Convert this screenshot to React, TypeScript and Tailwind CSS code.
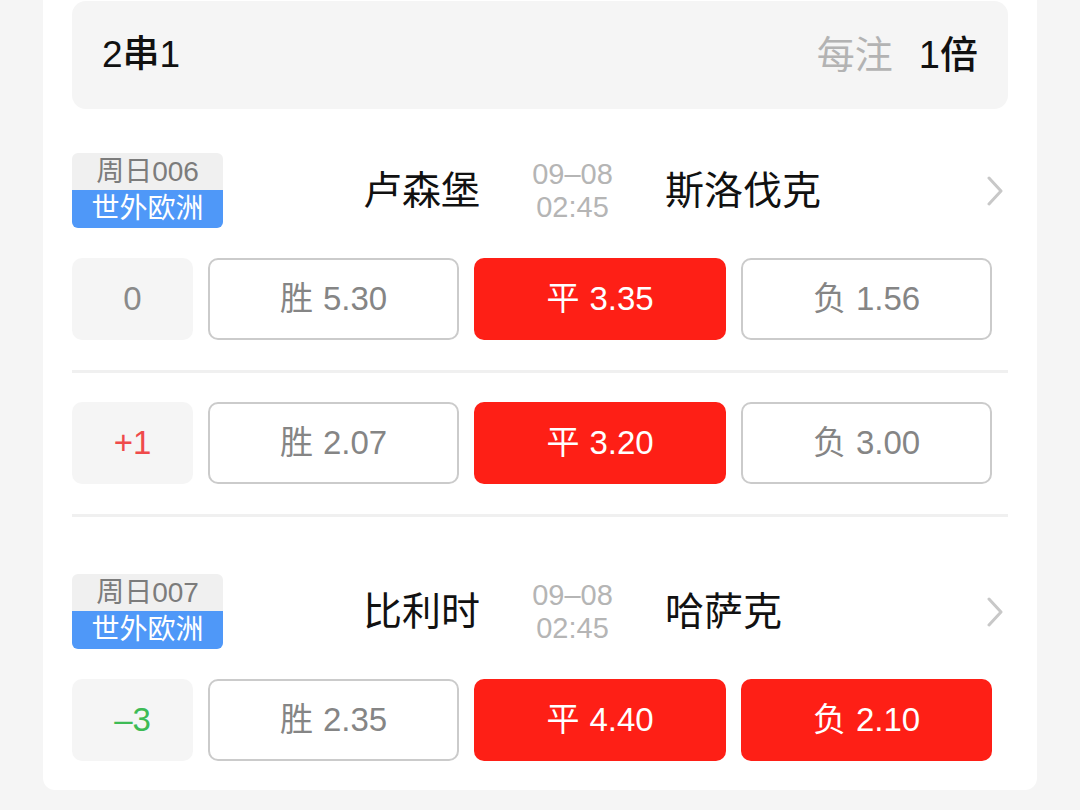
import React from "react";

const FONT = { fontFamily: '"Liberation Sans", "Noto Sans CJK SC", sans-serif' };

type Odd = { label: string; value: string; selected: boolean };
type Row = { handicap: string; hColor: string; odds: Odd[] };
type Match = { code: string; league: string; home: string; away: string; date: string; time: string; rows: Row[] };

const matches: Match[] = [
  {
    code: "周日006",
    league: "世外欧洲",
    home: "卢森堡",
    away: "斯洛伐克",
    date: "09–08",
    time: "02:45",
    rows: [
      {
        handicap: "0",
        hColor: "text-[#8a8a8a]",
        odds: [
          { label: "胜", value: "5.30", selected: false },
          { label: "平", value: "3.35", selected: true },
          { label: "负", value: "1.56", selected: false },
        ],
      },
      {
        handicap: "+1",
        hColor: "text-[#ef4a4a]",
        odds: [
          { label: "胜", value: "2.07", selected: false },
          { label: "平", value: "3.20", selected: true },
          { label: "负", value: "3.00", selected: false },
        ],
      },
    ],
  },
  {
    code: "周日007",
    league: "世外欧洲",
    home: "比利时",
    away: "哈萨克",
    date: "09–08",
    time: "02:45",
    rows: [
      {
        handicap: "–3",
        hColor: "text-[#3dbb55]",
        odds: [
          { label: "胜", value: "2.35", selected: false },
          { label: "平", value: "4.40", selected: true },
          { label: "负", value: "2.10", selected: true },
        ],
      },
    ],
  },
];

function Chevron() {
  return (
    <svg width="17" height="30" viewBox="0 0 17 30" fill="none">
      <path d="M2 2 L14 15 L2 28" stroke="#c8c8c8" strokeWidth="3" strokeLinecap="round" strokeLinejoin="round" />
    </svg>
  );
}

function OddsRow({ row }: { row: Row }) {
  return (
    <div className="flex gap-[15px] h-[82px]">
      <div className={`w-[121px] shrink-0 rounded-[10px] bg-[#f5f5f5] flex items-center justify-center text-[33px] ${row.hColor}`}>
        {row.handicap}
      </div>
      {row.odds.map((o, i) => (
        <div
          key={i}
          className={`${i === 1 ? "w-[252px]" : "w-[251px]"} shrink-0 rounded-[10px] flex items-center justify-center text-[33px] ${
            o.selected ? "bg-[#fe1f16] text-white" : "border-2 border-[#cbcbcb] bg-white text-[#858585]"
          }`}
        >
          <span>{o.label}</span>
          <span className="ml-[10px]">{o.value}</span>
        </div>
      ))}
    </div>
  );
}

function MatchHeader({ m }: { m: Match }) {
  return (
    <div className="flex items-center h-[75px]">
      <div className="w-[151px] shrink-0 h-[75px] rounded-[6px] overflow-hidden flex flex-col">
        <div className="h-[37px] bg-[#f0f0f0] text-[#7c7c7c] text-[28px] leading-[37px] text-center">{m.code}</div>
        <div className="h-[38px] bg-[#4f98f8] text-white text-[28px] leading-[38px] text-center">{m.league}</div>
      </div>
      <div className="w-[257px] shrink-0 text-right text-[39px] text-[#111] leading-none">{m.home}</div>
      <div className="w-[185px] shrink-0 text-center text-[29px] text-[#b5b5b5] leading-[33px]">
        <div>{m.date}</div>
        <div>{m.time}</div>
      </div>
      <div className="flex-1 text-[39px] text-[#111] leading-none">{m.away}</div>
      <div className="pr-[4px] flex items-center">
        <Chevron />
      </div>
    </div>
  );
}

export default function App() {
  return (
    <div className="w-[1080px] h-[810px] bg-[#f5f5f5] overflow-hidden" style={FONT}>
      <div className="mx-[43px] bg-white rounded-b-[12px] px-[29px] pt-px pb-[29px]">
        <div className="h-[108px] rounded-[14px] bg-[#f5f5f5] flex items-center justify-between px-[30px]">
          <div className="text-[37px] text-[#111] font-medium">2串1</div>
          <div className="flex items-center text-[38px]">
            <span className="text-[#b3b3b3]">每注</span>
            <span className="ml-[26px] text-[#111] font-medium">1倍</span>
          </div>
        </div>

        <div className="mt-[44px]">
          <MatchHeader m={matches[0]} />
          <div className="mt-[30px]">
            <OddsRow row={matches[0].rows[0]} />
          </div>
          <div className="mt-[30px] h-[3px] bg-[#f0f0f0]" />
          <div className="mt-[29px]">
            <OddsRow row={matches[0].rows[1]} />
          </div>
          <div className="mt-[30px] h-[3px] bg-[#f0f0f0]" />
        </div>

        <div className="mt-[57px]">
          <MatchHeader m={matches[1]} />
          <div className="mt-[30px]">
            <OddsRow row={matches[1].rows[0]} />
          </div>
        </div>
      </div>
    </div>
  );
}
